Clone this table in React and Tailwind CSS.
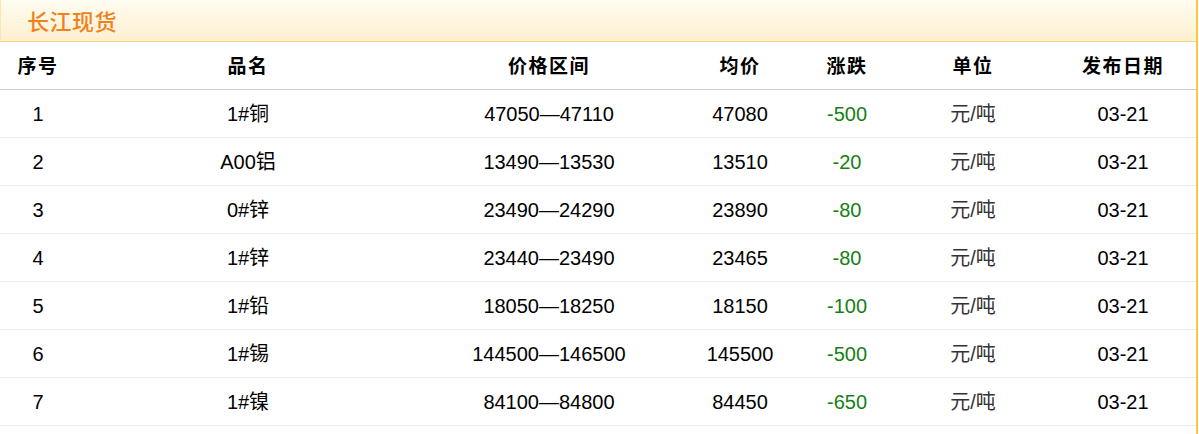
import React from "react";

const rows = [
  ["1", "1#铜", "47050—47110", "47080", "-500", "元/吨", "03-21"],
  ["2", "A00铝", "13490—13530", "13510", "-20", "元/吨", "03-21"],
  ["3", "0#锌", "23490—24290", "23890", "-80", "元/吨", "03-21"],
  ["4", "1#锌", "23440—23490", "23465", "-80", "元/吨", "03-21"],
  ["5", "1#铅", "18050—18250", "18150", "-100", "元/吨", "03-21"],
  ["6", "1#锡", "144500—146500", "145500", "-500", "元/吨", "03-21"],
  ["7", "1#镍", "84100—84800", "84450", "-650", "元/吨", "03-21"],
];

const heads = ["序号", "品名", "价格区间", "均价", "涨跌", "单位", "发布日期"];

const gridCls = "grid grid-cols-[76px_344px_258px_124px_90px_162px_138px] items-center";

export default function App() {
  return (
    <div
      className="w-[1199px] h-[434px] bg-white overflow-hidden"
      style={{ fontFamily: '"Liberation Sans", Arial, "Noto Sans CJK SC", sans-serif' }}
    >
      <div className="w-[1198px] h-full border-r-2 border-[#f7c948]">
        <div className="h-[42px] flex items-center pl-[26px] border-l border-b border-l-[#fbe7b0] border-b-[#f3d37c] bg-gradient-to-b from-[#fffcf1] to-[#fdf0cf]">
          <span
            className="text-[22px] text-[#f0821e] tracking-[0.5px]"
            style={{ fontFamily: '"Noto Sans CJK SC", sans-serif', fontWeight: 500 }}
          >
            长江现货
          </span>
        </div>
        <div className={`${gridCls} h-[48px] border-b border-[#cfcfcf]`}>
          {heads.map((h, i) => (
            <div
              key={i}
              className="text-center text-[19px] text-black"
              style={{ fontFamily: '"Noto Sans CJK SC", sans-serif', fontWeight: 700, letterSpacing: "1.5px" }}
            >
              {h}
            </div>
          ))}
        </div>
        {rows.map((r, ri) => (
          <div key={ri} className={`${gridCls} h-[48px] border-b border-[#ececec] text-[20px] text-black`}>
            {r.map((c, ci) => (
              <div
                key={ci}
                className={`text-center ${ci === 4 ? "text-[#168016]" : ""} ${ci === 5 ? "text-[#333]" : ""}`}
              >
                {c}
              </div>
            ))}
          </div>
        ))}
      </div>
    </div>
  );
}
